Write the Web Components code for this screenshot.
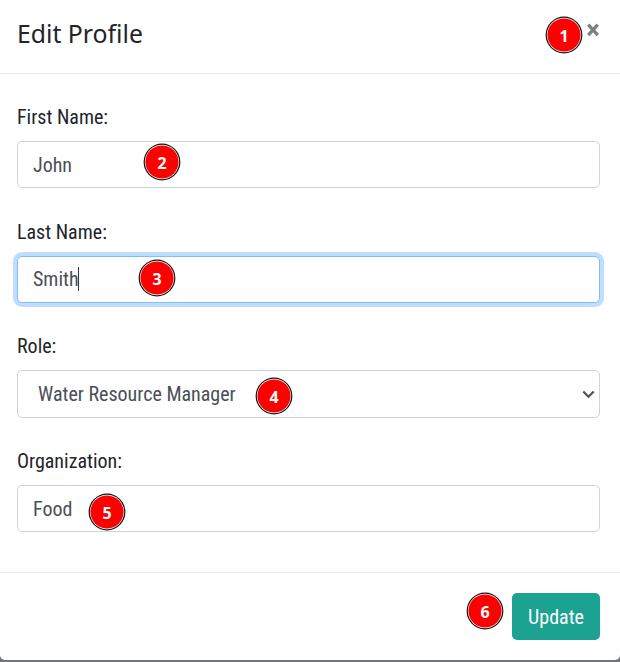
<!DOCTYPE html>
<html lang="en">
<head>
<meta charset="utf-8">
<title>Edit Profile</title>
<style>
html,body{margin:0;height:100%;background:#737475;overflow:hidden}
</style>
</head>
<body>
<profile-dialog></profile-dialog>
<script>
const define = (name, html, setup) => customElements.define(name, class extends HTMLElement {
  constructor() {
    super();
    this.attachShadow({mode: 'open'}).innerHTML = html;
  }
  connectedCallback() { if (setup) setup(this, this.shadowRoot); }
});

define('step-badge', `
<style>
:host{position:absolute;width:38px;height:38px;display:grid;place-items:center;
 color:#fff;font:700 16px/20px "Noto Sans",sans-serif}
svg,span{grid-area:1/1}
span{padding-top:2px}
</style>
<svg width="38" height="38"><circle cx="19" cy="19" r="18.4" fill="#111"/><circle cx="19" cy="19" r="17.2" fill="#fff"/><circle cx="19" cy="19" r="16.6" fill="#f00"/></svg>
<span><slot></slot></span>`);

define('form-field', `
<style>
:host{display:block;height:114.6px}
label{display:block;height:30px;line-height:30px;margin-bottom:9px;color:#212529}
.box{box-sizing:border-box;height:47px;border:1px solid #ced4da;border-radius:5px;
 padding:0 15px;display:flex;align-items:center;color:#495057;background:#fff}
:host([focused]) .box{border-color:#80bdff;box-shadow:0 0 0 4px #bfdeff}
:host([select]) .box{padding:0 4px 0 20px;justify-content:space-between;height:48px}
:host(:last-of-type) .box{padding-top:1px}
i,svg{display:none}
:host([focused]) i{display:block;width:1px;height:24px;margin-left:-1px;background:#343a40}
:host([select]) svg{display:block}
.value{line-height:30px}
</style>
<label></label>
<div class="box"><span class="value"></span><i></i>
<svg width="13" height="9" viewBox="0 0 13 9" fill="none" stroke="#495057" stroke-width="2.1"><path d="M1.3 1.5 6.5 6.7 11.7 1.5"/></svg></div>`, (el, root) => {
  root.querySelector('label').textContent = el.getAttribute('label');
  root.querySelector('.value').textContent = el.getAttribute('value');
});

define('action-button', `
<style>
:host{display:flex;align-items:center;justify-content:center;width:88px;height:47px;border-radius:5px;
 background:#1ba291;color:#fff}
</style><span><slot></slot></span>`);

define('close-icon', `
<style>:host{display:block;width:12px;height:14px}svg{display:block}</style>
<svg width="12" height="14" viewBox="0 0 12 14" stroke="#7f7f7f" stroke-width="3.3" fill="none"><path d="M1.2 1.6 10.8 12.2M10.8 1.6 1.2 12.2"/></svg>`);

define('profile-dialog', `
<style>
:host{display:flex;flex-direction:column;position:relative;box-sizing:border-box;width:620px;height:660px;
 background:#fff;border-radius:0 0 5px 5px;
 font:400 20px/30px "Roboto Condensed",Roboto,sans-serif;font-stretch:75%}
header{box-sizing:border-box;height:74px;flex:none;display:flex;justify-content:space-between;
 padding:15px 21px 0 17px;border-bottom:1px solid #e9ecef}
h1{margin:0;font:400 24.8px/36px "Noto Sans",sans-serif;color:#212529}
close-icon{margin-top:8px}
main{height:498px;box-sizing:border-box;flex:none;padding:28px 20px 0 17px}
footer{box-sizing:border-box;flex:1;border-top:1px solid #e9ecef;display:flex;justify-content:flex-end;padding:20px 20px 0}
</style>
<header><h1>Edit Profile</h1><close-icon></close-icon></header>
<main>
<form-field label="First Name:" value="John"></form-field>
<form-field label="Last Name:" value="Smith" focused></form-field>
<form-field label="Role:" value="Water Resource Manager" select></form-field>
<form-field label="Organization:" value="Food"></form-field>
</main>
<footer><action-button>Update</action-button></footer>
<step-badge style="left:545px;top:16px">1</step-badge>
<step-badge style="left:143px;top:143px">2</step-badge>
<step-badge style="left:138px;top:259px">3</step-badge>
<step-badge style="left:255px;top:377px">4</step-badge>
<step-badge style="left:88px;top:493px">5</step-badge>
<step-badge style="left:466px;top:592px">6</step-badge>`);
</script>
</body>
</html>
